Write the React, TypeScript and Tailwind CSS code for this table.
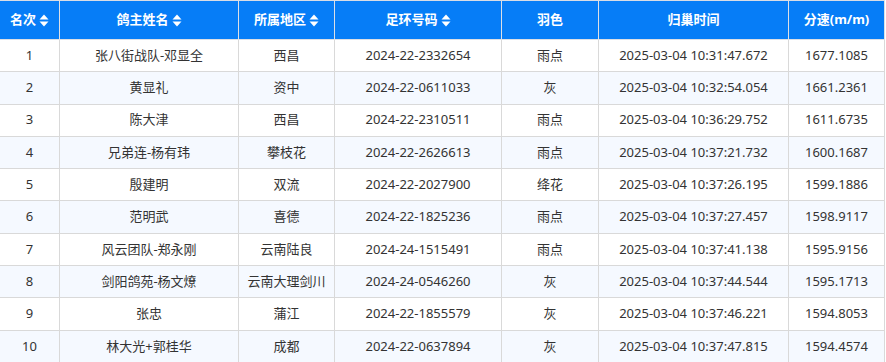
import React from 'react';

type Row = {
    rank: number;
    name: string;
    area: string;
    ring: string;
    color: string;
    time: string;
    speed: string;
};

const rows: Row[] = [
    { rank: 1, name: '张八街战队-邓显全', area: '西昌', ring: '2024-22-2332654', color: '雨点', time: '2025-03-04 10:31:47.672', speed: '1677.1085' },
    { rank: 2, name: '黄显礼', area: '资中', ring: '2024-22-0611033', color: '灰', time: '2025-03-04 10:32:54.054', speed: '1661.2361' },
    { rank: 3, name: '陈大津', area: '西昌', ring: '2024-22-2310511', color: '雨点', time: '2025-03-04 10:36:29.752', speed: '1611.6735' },
    { rank: 4, name: '兄弟连-杨有玮', area: '攀枝花', ring: '2024-22-2626613', color: '雨点', time: '2025-03-04 10:37:21.732', speed: '1600.1687' },
    { rank: 5, name: '殷建明', area: '双流', ring: '2024-22-2027900', color: '绛花', time: '2025-03-04 10:37:26.195', speed: '1599.1886' },
    { rank: 6, name: '范明武', area: '喜德', ring: '2024-22-1825236', color: '雨点', time: '2025-03-04 10:37:27.457', speed: '1598.9117' },
    { rank: 7, name: '风云团队-郑永刚', area: '云南陆良', ring: '2024-24-1515491', color: '雨点', time: '2025-03-04 10:37:41.138', speed: '1595.9156' },
    { rank: 8, name: '剑阳鸽苑-杨文燎', area: '云南大理剑川', ring: '2024-24-0546260', color: '灰', time: '2025-03-04 10:37:44.544', speed: '1595.1713' },
    { rank: 9, name: '张忠', area: '蒲江', ring: '2024-22-1855579', color: '灰', time: '2025-03-04 10:37:46.221', speed: '1594.8053' },
    { rank: 10, name: '林大光+郭桂华', area: '成都', ring: '2024-22-0637894', color: '灰', time: '2025-03-04 10:37:47.815', speed: '1594.4574' }
];

const columns: { label: string; width: string; sortable: boolean }[] = [
    { label: '名次', width: 'w-[60px]', sortable: true },
    { label: '鸽主姓名', width: 'w-[179px]', sortable: true },
    { label: '所属地区', width: 'w-[96px]', sortable: true },
    { label: '足环号码', width: 'w-[167px]', sortable: true },
    { label: '羽色', width: 'w-[97px]', sortable: false },
    { label: '归巢时间', width: 'w-[190px]', sortable: false },
    { label: '分速(m/m)', width: 'w-[96px]', sortable: false }
];

function SortIcon(): JSX.Element {
    return (
        <svg width="10" height="13" viewBox="0 0 10 13" className="ml-[3px] inline-block">
            <path d="M5 0.5 L9.5 5.5 L0.5 5.5 Z" fill="white" />
            <path d="M5 12.5 L9.5 7.5 L0.5 7.5 Z" fill="white" />
        </svg>
    );
}

export default function App(): JSX.Element {
    return (
        <div
            className="w-[886px] h-[362px] overflow-hidden bg-white"
            style={{ fontFamily: '"Noto Sans", "Noto Sans CJK SC", sans-serif' }}
        >
            <table className="table-fixed border-collapse w-[885px] ml-[-1px] text-[13px] text-[#333]">
                <thead>
                    <tr className="bg-[#067df7] text-white h-[39px]">
                        {columns.map((col) => (
                            <th
                                key={col.label}
                                className={
                                    col.width +
                                    ' border border-[#dcdfe6] border-t-[#d8dde6] font-bold text-[13px] text-center p-0'
                                }
                            >
                                <span className="inline-flex items-center">
                                    {col.label}
                                    {col.sortable && <SortIcon />}
                                </span>
                            </th>
                        ))}
                    </tr>
                </thead>
                <tbody>
                    {rows.map((row, i) => (
                        <tr
                            key={row.rank}
                            className={'h-[32.3px] ' + (i % 2 === 1 ? 'bg-[#f5f9ff]' : 'bg-white')}
                        >
                            {[row.rank, row.name, row.area, row.ring, row.color, row.time, row.speed].map(
                                (v, j) => (
                                    <td
                                        key={j}
                                        className="border border-[#d9d9d9] text-center p-0 whitespace-nowrap"
                                    >
                                        {v}
                                    </td>
                                )
                            )}
                        </tr>
                    ))}
                </tbody>
            </table>
        </div>
    );
}
